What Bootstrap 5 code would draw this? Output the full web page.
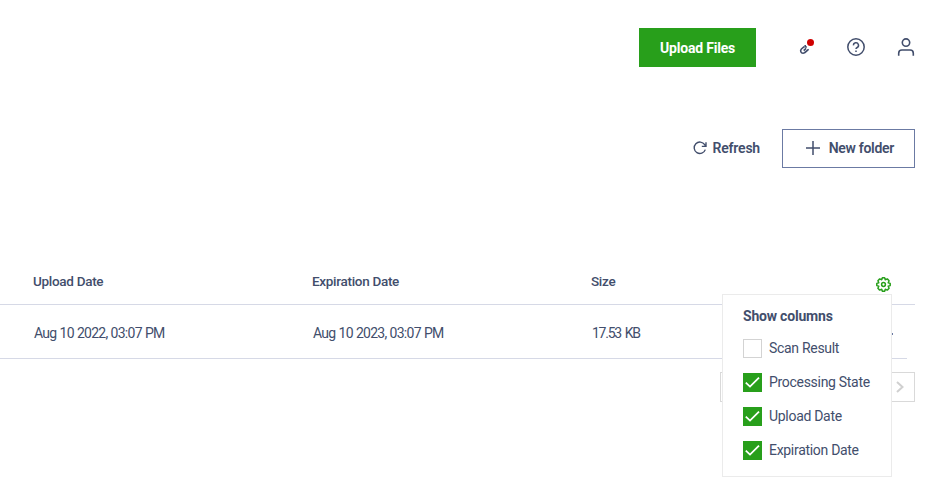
<!DOCTYPE html>
<html lang="en">
<head>
<meta charset="utf-8">
<meta name="viewport" content="width=device-width, initial-scale=1">
<title>Files</title>
<link href="https://cdn.jsdelivr.net/npm/bootstrap@5.3.0/dist/css/bootstrap.min.css" rel="stylesheet">
<style>
:root{--ink:#424e6c;--green:#289f1b;--rule:#d6d9e6}
body{font-family:Roboto,"Liberation Sans",sans-serif;font-size:14px;line-height:20px;color:var(--ink);height:490px;overflow:hidden}
svg{display:block;fill:none;stroke:currentColor;flex:none}
.topbar{height:67px;padding:28px 34px 0 0}
.tools{height:101px;padding:62px 35px 0 0;gap:22px}
.btn{--bs-btn-border-radius:0;--bs-btn-font-size:14px;--bs-btn-line-height:20px;height:39px}
.btn-upload{width:117px;background:var(--green);color:#fff;font-weight:700;letter-spacing:-.2px}
.quick{height:39px;margin-left:40px;gap:30px}
.link-box{width:20px;height:20px}
.alert-dot{top:1px;right:2px;width:7px;height:7px;background:#d00000}
.btn-refresh{padding:0 0 2px;border:0;font-weight:600;letter-spacing:-.2px;color:var(--ink);gap:6px}
.btn-folder{width:133px;border:1px solid #6b7aa3;padding:0 20px 2px 23px;font-weight:600;letter-spacing:-.3px;color:var(--ink)}
.grid-row{display:grid;grid-template-columns:279px 279px 1fr;border-bottom:1px solid var(--rule);padding-left:33px}
.head-row{margin:91px 35px 0 0;height:46px;padding-top:12px;font-size:13.5px;font-weight:500;letter-spacing:-.3px}
.data-row{margin-right:43px;height:54px;padding:18px 0 0 34px;letter-spacing:-.74px;word-spacing:.4px}
.size-head{padding-right:24px}
.size-value{letter-spacing:-1.25px;word-spacing:1.500px}
.gear{color:var(--green);margin-top:6px}
.row-more{width:2px;height:2px;background:#6b7aa3;margin:10px 14px 0 0}
.pager{width:195px;height:30px;border:1px solid #d9d9d9;margin:13px 35px 0 auto;padding-right:9px;color:#d0d0d0}
.column-menu{left:722px;top:294px;width:170px;height:183px;border:1px solid #ebebeb;background:#fff;padding:11px 0 0 20px}
.menu-title{font-weight:700;letter-spacing:-.2px;margin-bottom:12px}
.menu-item{gap:7px;height:20px;margin-bottom:14px;white-space:nowrap;letter-spacing:-.3px}
.form-check-input.tick{width:19px;height:19px;margin:1px 0 0;border:1px solid #d3d3d3;border-radius:0;flex:none}
.form-check-input.tick:checked{background-color:var(--green);border-color:var(--green);background-size:19px;background-image:url("data:image/svg+xml,%3csvg xmlns='http://www.w3.org/2000/svg' viewBox='0 0 19 19'%3e%3cpath fill='none' stroke='%23fff' stroke-width='1.8' d='M2.800 9.600l4.200 4L16 4.600'/%3e%3c/svg%3e")}
</style>
</head>
<body class="bg-white position-relative">
<header class="topbar d-flex justify-content-end align-items-start">
  <button class="btn btn-upload p-0">Upload Files</button>
  <nav class="quick d-flex align-items-center">
    <span class="link-box position-relative">
      <svg width="20" height="20" viewBox="0 0 20 20" stroke-width="1.600"><path d="M8.200 8.700L5.400 11C3.800 12.800 4.900 15.200 7 15.200 8.800 15.200 10.200 13.600 12.600 11.200M7.700 12.700l2.400-2.300M9.200 7v1.700l1.600.4"/></svg>
      <span class="alert-dot position-absolute rounded-circle"></span>
    </span>
    <svg width="20" height="20" viewBox="0 0 20 20" stroke-width="1.500"><circle cx="10" cy="9" r="8.200"/><path d="M7.500 7.400a2.500 2.500 0 1 1 3.700 2.100c-.8.45-1.200.9-1.200 1.600"/><path d="M10 12.500v1.500"/></svg>
    <svg width="20" height="20" viewBox="0 0 20 20" stroke-width="1.600"><circle cx="10" cy="4.600" r="3.700"/><path d="M2.700 17.700v-2.500q0-3.200 3.200-3.200h8.200q3.200 0 3.200 3.200v2.500"/></svg>
  </nav>
</header>
<section class="tools d-flex justify-content-end">
  <button class="btn btn-refresh d-flex align-items-center">
    <svg width="14" height="14" viewBox="0 0 14 14" stroke-width="1.400"><path d="M12.300 8.600A5.700 5.700 0 1 1 11.700 3.700L12.800 5.300M13 1.200v4.200H8.800"/></svg>
    <span>Refresh</span>
  </button>
  <button class="btn btn-folder d-flex align-items-center justify-content-between">
    <svg width="14" height="14" viewBox="0 0 14 14" stroke-width="1.500"><path d="M7 0v14M0 7h14"/></svg>
    <span>New folder</span>
  </button>
</section>
<main>
  <div class="grid-row head-row">
    <div>Upload Date</div>
    <div>Expiration Date</div>
    <div class="size-head d-flex justify-content-between"><span>Size</span>
      <svg class="gear" width="15" height="15" viewBox="0 0 15 15" stroke-width="1.500" stroke-linejoin="round"><circle cx="7.500" cy="7.500" r="1.900"/><path d="M6.400.8h2.200l.7 2 2-.9 1.800 1.800-.9 2 2 .7v2.200l-2 .7.900 2-1.800 1.800-2-.9-.7 2H6.400l-.7-2-2 .9-1.800-1.800.9-2-2-.7V6.400l2-.7-.9-2 1.800-1.800 2 .9z"/></svg>
    </div>
  </div>
  <div class="grid-row data-row">
    <div>Aug 10 2022, 03:07 PM</div>
    <div>Aug 10 2023, 03:07 PM</div>
    <div class="d-flex justify-content-between"><span class="size-value">17.53 KB</span><span class="row-more"></span></div>
  </div>
  <div class="pager d-flex align-items-center justify-content-end">
    <svg width="10" height="14" viewBox="0 0 10 14" stroke-width="2"><path d="M2 2l5.500 5L2 12"/></svg>
  </div>
</main>
<aside class="column-menu position-absolute">
  <div class="menu-title">Show columns</div>
  <label class="menu-item d-flex"><input class="form-check-input tick" type="checkbox"><span>Scan Result</span></label>
  <label class="menu-item d-flex"><input class="form-check-input tick" type="checkbox" checked><span>Processing State</span></label>
  <label class="menu-item d-flex"><input class="form-check-input tick" type="checkbox" checked><span>Upload Date</span></label>
  <label class="menu-item d-flex"><input class="form-check-input tick" type="checkbox" checked><span>Expiration Date</span></label>
</aside>
<script src="https://cdn.jsdelivr.net/npm/bootstrap@5.3.0/dist/js/bootstrap.bundle.min.js"></script>
</body>
</html>
